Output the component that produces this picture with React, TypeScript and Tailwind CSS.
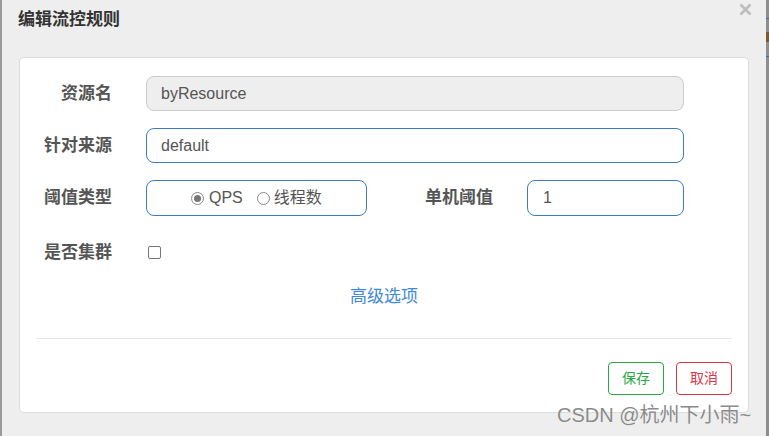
import React from "react";

const font = { fontFamily: '"Liberation Sans", "Noto Sans CJK SC", Arial, sans-serif' };

function Label({ children, w }: { children: React.ReactNode; w: string }) {
  return (
    <div className={`${w} shrink-0 text-right text-[17px] font-bold text-[#555] leading-none`}>{children}</div>
  );
}

export default function App() {
  return (
    <div className="relative flex h-[436px] w-[769px] overflow-hidden" style={font}>
      <div className="w-[2px] shrink-0 bg-[#9a9a9a]" />
      <div className="flex w-[764px] shrink-0 flex-col bg-[#eeeeee]">
        <div className="relative flex h-[57px] shrink-0 items-start">
          <div className="ml-[16px] mt-[9px] text-[17px] font-bold leading-[22px] text-[#333]">编辑流控规则</div>
          <svg className="absolute left-[737px] top-[3px]" width="13" height="13" viewBox="0 0 13 13">
            <path d="M1.5 1.5 L11.5 11.5 M11.5 1.5 L1.5 11.5" stroke="#bdbdbd" strokeWidth="2.6" strokeLinecap="butt" />
          </svg>
        </div>
        <div className="ml-[17px] flex h-[356px] w-[730px] flex-col rounded-[5px] border border-[#dddddd] bg-white">
          <div className="mt-[18px] flex h-[35px] items-center">
            <Label w="w-[92px]">资源名</Label>
            <div className="ml-[34px] flex h-[35px] w-[538px] items-center rounded-[8px] border border-[#cccccc] bg-[#eeeeee] pl-[14px] text-[16px] text-[#555]">
              byResource
            </div>
          </div>
          <div className="mt-[17px] flex h-[35px] items-center">
            <Label w="w-[92px]">针对来源</Label>
            <div className="ml-[34px] flex h-[35px] w-[538px] items-center rounded-[8px] border border-[#3b7bc2] bg-white pl-[14px] text-[16px] text-[#555]">
              default
            </div>
          </div>
          <div className="mt-[17px] flex h-[35px] items-center">
            <Label w="w-[92px]">阈值类型</Label>
            <div className="ml-[34px] flex h-[36px] w-[221px] items-center rounded-[8px] border border-[#3b7bc2] bg-white pl-[44px] pt-[1px] text-[16px] text-[#555]">
              <span className="flex h-[13px] w-[13px] items-center justify-center rounded-full border border-[#8a8a8a]">
                <span className="h-[7px] w-[7px] rounded-full bg-[#777]" />
              </span>
              <span className="ml-[5px]">QPS</span>
              <span className="ml-[14px] h-[13px] w-[13px] rounded-full border border-[#8a8a8a]" />
              <span className="ml-[4px]">线程数</span>
            </div>
            <Label w="w-[126px]">单机阈值</Label>
            <div className="ml-[34px] flex h-[36px] w-[157px] items-center rounded-[8px] border border-[#3b7bc2] bg-white pl-[15px] text-[16px] text-[#555]">
              1
            </div>
          </div>
          <div className="mt-[20px] flex h-[35px] items-center">
            <Label w="w-[92px]">是否集群</Label>
            <span className="ml-[36px] h-[13px] w-[13px] rounded-[2px] border border-[#767676]" />
          </div>
          <div className="mt-[15px] flex h-[24px] items-center justify-center text-[17px] text-[#3f8ad8]">高级选项</div>
          <div className="mx-[16px] mt-[29px] h-px bg-[#e5e5e5]" />
          <div className="mr-[16px] mt-[23px] flex justify-end gap-[12px]">
            <div className="flex h-[33px] w-[56px] items-center justify-center rounded-[4px] border border-[#28a745] text-[14px] text-[#28a745]">保存</div>
            <div className="flex h-[33px] w-[56px] items-center justify-center rounded-[4px] border border-[#dc3545] text-[14px] text-[#dc3545]">取消</div>
          </div>
        </div>
      </div>
      <div className="flex w-[3px] shrink-0 flex-col bg-[#8e8e8e]">
        <div className="h-[18px]" />
        <div className="h-px bg-[#3b6fb0]" />
        <div className="h-[13px]" />
        <div className="h-[10px] bg-[#7a5a30]" />
        <div className="h-[14px]" />
        <div className="h-px bg-[#3b6fb0]" />
      </div>
      <div className="absolute left-[557px] top-[404px] text-[20px] leading-[23px] text-[#8a8a8a]" style={{ textShadow: "0 0 1px #fff" }}>
        CSDN @杭州下小雨~
      </div>
    </div>
  );
}
